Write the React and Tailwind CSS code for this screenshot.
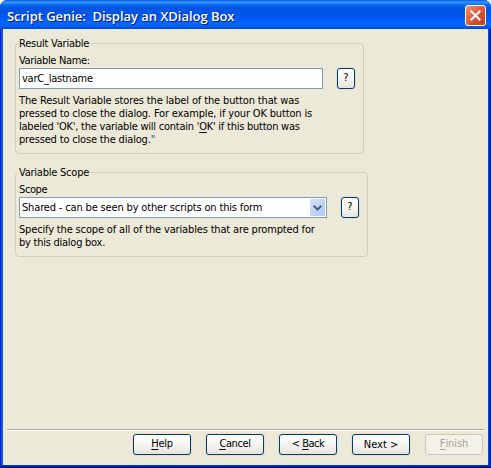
import React from "react";

const textFont = "font-['DejaVu_Sans_Condensed','DejaVu_Sans',sans-serif] [font-stretch:condensed]";

function Line({ children, className = "" }) {
  return <div className={`h-[13px] w-max leading-[13px] whitespace-pre ${className}`}>{children}</div>;
}

function Key({ children }) {
  return <span className="underline decoration-1 underline-offset-2">{children}</span>;
}

function Button({ children, small, disabled, className = "pb-px" }) {
  return (
    <button
      className={`flex h-[21px] shrink-0 items-center justify-center rounded-[3px] border whitespace-pre ${
        small ? "w-[18px]" : "w-[58px]"
      } ${
        disabled
          ? "border-[#c9c7ba] bg-[#f3f2e9] text-[#a5a394]"
          : "border-[#003c74] bg-linear-to-b from-white via-[#f5f5f0] to-[#e6e3dc] text-black shadow-[0_0_0_1px_#e4e0d0]"
      } ${className}`}
    >
      {children}
    </button>
  );
}

function Group({ title, className, children }) {
  return (
    <section className={`rounded-[4px] border border-[#d0d0bf] pl-[3px] ${className}`}>
      <div className="-mt-[7px] h-[13px] w-max bg-[#ece9d8] leading-[13px] tracking-[-0.23px]">{title}</div>
      {children}
    </section>
  );
}

export default function App() {
  return (
    <div className={`flex h-[468px] w-[491px] flex-col overflow-hidden rounded-t-[7px] bg-[linear-gradient(to_right,#0019cf_0px,#0831d9_1px,#166aee_2px,#0855dd_3px,#0855dd_488px,#0441d8_489px,#001da0_490px,#00138c_491px)] text-[11px] text-black ${textFont}`}>
      <header className="flex h-[29px] shrink-0 items-center justify-between bg-[linear-gradient(to_bottom,#0058e6_0px,#3a93ff_2px,#288eff_3px,#0665ef_5px,#0055e2_8px,#0054e3_14px,#005af5_18px,#0266ff_23px,#0162f8_26px,#0046d5_29px)] pr-[5px] pl-[7px]">
        <h1 className="mt-[3px] font-['Open_Sans',sans-serif] text-[13px] leading-[18px] font-semibold tracking-[-0.04px] whitespace-pre text-white [font-stretch:normal] [text-shadow:1px_1px_#0a1883]">
          Script Genie:  Display an XDialog Box
        </h1>
        <button className="mt-[2px] flex size-[21px] items-center justify-center rounded-[3px] border border-white bg-linear-to-br from-[#ee9278] via-[#e0563a] to-[#c13a14]">
          <svg width="11" height="11" viewBox="0 0 11 11" fill="none" stroke="white" strokeWidth="2">
            <path d="M.7.7 10.3 10.3M10.3.7.7 10.3" />
          </svg>
        </button>
      </header>

      <main className="mx-[3px] flex h-[436px] shrink-0 flex-col bg-[#ece9d8]">
        <div className="flex h-[400px] flex-col pt-[14px] pl-[12px]">
          <Group title="Result Variable" className="h-[111px] w-[349px]">
            <Line className="mt-[4px] tracking-[-0.36px]">Variable Name:</Line>
            <div className="mt-px flex">
              <div className="flex h-[21px] w-[304px] items-center border border-[#7f9db9] bg-white pt-px pl-[2px] tracking-[-0.23px] whitespace-pre">varC_lastname</div>
              <div className="ml-[14px]"><Button small>?</Button></div>
            </div>
            <div className="mt-[5px]">
              <Line className="tracking-[-0.14px]">The Result Variable stores the label of the button that was</Line>
              <Line className="tracking-[-0.16px]">pressed to close the dialog. For example, if your OK button is</Line>
              <Line className="tracking-[-0.24px]">labeled 'OK', the variable will contain '<Key>O</Key>K' if this button was</Line>
              <Line className="tracking-[-0.17px]">pressed to close the dialog.<span className="text-[#2b5a78]">"</span></Line>
            </div>
          </Group>
          <Group title="Variable Scope" className="mt-[18px] h-[85px] w-[353px]">
            <Line className="mt-[4px] tracking-[-0.4px]">Scope</Line>
            <div className="mt-px flex">
              <div className="flex h-[21px] w-[308px] items-center justify-between border border-[#7f9db9] bg-white pr-px pl-[2px] tracking-[-0.16px] whitespace-pre">
                <span className="pt-px">Shared - can be seen by other scripts on this form</span>
                <span className="flex h-[17px] w-[15px] items-center justify-center rounded-[1px] bg-linear-to-br from-[#d3e0fd] to-[#b0c8f7]">
                  <svg width="9" height="6" viewBox="0 0 9 6" fill="none" stroke="#4d6185" strokeWidth="2">
                    <path d="M.7.7 4.5 4.5 8.3.7" />
                  </svg>
                </span>
              </div>
              <div className="ml-[14px]"><Button small>?</Button></div>
            </div>
            <div className="mt-[5px]">
              <Line className="tracking-[-0.16px]">Specify the scope of all of the variables that are prompted for</Line>
              <Line className="tracking-[-0.25px]">by this dialog box.</Line>
            </div>
          </Group>
        </div>
        <footer className="mx-[4px] h-[36px] border-t border-[#aca899]">
          <div className="flex justify-end gap-[15px] border-t border-white pt-[3px] pr-[1px]">
            <Button className="pb-px tracking-[-0.3px]"><Key>H</Key>elp</Button>
            <Button className="pb-px tracking-[-0.4px]"><Key>C</Key>ancel</Button>
            <Button className="pb-px tracking-[-0.5px]">{"< "}<Key>B</Key>ack</Button>
            <Button className="pt-px">{"Next >"}</Button>
            <Button disabled className="pb-px tracking-[-0.1px]"><Key>F</Key>inish</Button>
          </div>
        </footer>
      </main>
      <div className="h-[3px] shrink-0 bg-[linear-gradient(to_bottom,#0441d8,#001da0,#00138c)]" />
    </div>
  );
}
